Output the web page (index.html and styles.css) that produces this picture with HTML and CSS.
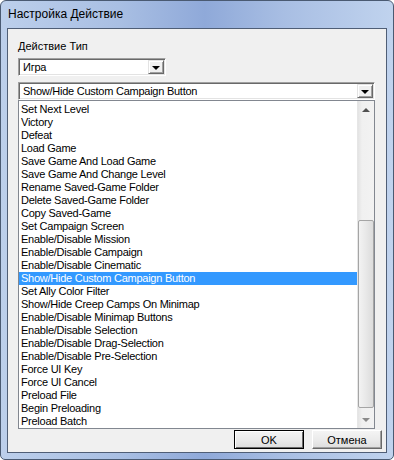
FILE: index.html
```html
<!DOCTYPE html>
<html lang="ru">
<head>
    <meta charset="UTF-8">
    <title>Настройка Действие</title>
    <link rel="stylesheet" href="styles.css">
</head>
<body>
    <div class="window">
        <div class="titlebar">Настройка Действие</div>
        <div class="client">
            <div class="label">Действие Тип</div>
            <div class="combo combo-small">
                <div class="combo-text">Игра</div>
                <div class="combo-btn"><span class="arrow-down"></span></div>
            </div>
            <div class="combo combo-wide">
                <div class="combo-text">Show/Hide Custom Campaign Button</div>
                <div class="combo-btn"><span class="arrow-down"></span></div>
            </div>
            <div class="listbox">
                <ul class="items">
                    <li>Set Next Level</li>
                    <li>Victory</li>
                    <li>Defeat</li>
                    <li>Load Game</li>
                    <li>Save Game And Load Game</li>
                    <li>Save Game And Change Level</li>
                    <li>Rename Saved-Game Folder</li>
                    <li>Delete Saved-Game Folder</li>
                    <li>Copy Saved-Game</li>
                    <li>Set Campaign Screen</li>
                    <li>Enable/Disable Mission</li>
                    <li>Enable/Disable Campaign</li>
                    <li>Enable/Disable Cinematic</li>
                    <li class="selected">Show/Hide Custom Campaign Button</li>
                    <li>Set Ally Color Filter</li>
                    <li>Show/Hide Creep Camps On Minimap</li>
                    <li>Enable/Disable Minimap Buttons</li>
                    <li>Enable/Disable Selection</li>
                    <li>Enable/Disable Drag-Selection</li>
                    <li>Enable/Disable Pre-Selection</li>
                    <li>Force UI Key</li>
                    <li>Force UI Cancel</li>
                    <li>Preload File</li>
                    <li>Begin Preloading</li>
                    <li>Preload Batch</li>
                </ul>
                <div class="scrollbar">
                    <div class="sb-arrow"><span class="tri-up"></span></div>
                    <div class="sb-track">
                        <div class="sb-thumb"></div>
                    </div>
                    <div class="sb-arrow"><span class="tri-down"></span></div>
                </div>
            </div>
            <div class="buttons">
                <button class="btn btn-default">OK</button>
                <button class="btn">Отмена</button>
            </div>
        </div>
    </div>
</body>
</html>
```

FILE: styles.css
```css
* {
    margin: 0;
    padding: 0;
    box-sizing: border-box;
}

body {
    width: 394px;
    height: 460px;
    overflow: hidden;
    background: #ffffff;
    font-family: "Liberation Sans", Arial, sans-serif;
}

.window {
    width: 394px;
    height: 460px;
    display: flex;
    flex-direction: column;
    padding: 0 6px 6px 6px;
    border: 1px solid #4a5a72;
    border-radius: 6px 6px 5px 5px;
    background: linear-gradient(90deg, #bccfeb 0%, #a9bfe3 30%, #8fa9d9 52%, #a8bee3 72%, #c0d3ee 100%);
}

.titlebar {
    height: 27px;
    line-height: 27px;
    padding-left: 1px;
    font-size: 12px;
    color: #000000;
}

.client {
    flex: 1;
    display: flex;
    flex-direction: column;
    padding: 11px 4px 0 10px;
    background: #f0f0f0;
    border: 1px solid #4f5e76;
}

.label {
    font-size: 11px;
    line-height: 13px;
    color: #000000;
    margin-bottom: 5px;
}

.combo {
    display: flex;
    height: 18px;
    background: #ffffff;
    border-top: 1px solid #a0a0a0;
    border-left: 1px solid #a0a0a0;
    border-right: 1px solid #ffffff;
    border-bottom: 1px solid #ffffff;
    box-shadow: inset 1px 1px 0 #696969, inset -1px -1px 0 #e3e3e3;
    padding: 2px;
}

.combo-small {
    width: 148px;
    margin-bottom: 6px;
}

.combo-wide {
    width: 357px;
}

.combo-text {
    flex: 1;
    font-size: 11px;
    line-height: 13px;
    letter-spacing: -0.25px;
    padding-left: 2px;
}

.combo-btn {
    width: 16px;
    display: flex;
    align-items: center;
    justify-content: center;
    background: #f0f0f0;
    border-top: 1px solid #e3e3e3;
    border-left: 1px solid #e3e3e3;
    border-right: 1px solid #696969;
    border-bottom: 1px solid #696969;
    box-shadow: inset 1px 1px 0 #ffffff, inset -1px -1px 0 #a0a0a0;
    margin: -1px -1px -1px 0;
}

.arrow-down {
    width: 0;
    height: 0;
    border-left: 4px solid transparent;
    border-right: 4px solid transparent;
    border-top: 4px solid #000000;
    margin-top: 1px;
}

.listbox {
    width: 357px;
    height: 329px;
    display: flex;
    background: #ffffff;
    border: 1px solid #828790;
}

.items {
    flex: 1;
    list-style: none;
    padding-top: 2px;
}

.items li {
    height: 13px;
    line-height: 13px;
    font-size: 11px;
    letter-spacing: -0.25px;
    padding-left: 2px;
    white-space: nowrap;
    color: #000000;
}

.items li.selected {
    background: #3399ff;
    color: #ffffff;
}

.scrollbar {
    width: 17px;
    display: flex;
    flex-direction: column;
    background: linear-gradient(90deg, #e3e3e3 0%, #f0f0f0 25%, #f2f2f2 100%);
    border-left: 1px solid #e6e6e6;
}

.sb-arrow {
    height: 17px;
    display: flex;
    align-items: center;
    justify-content: center;
}

.tri-up {
    width: 0;
    height: 0;
    border-left: 4px solid transparent;
    border-right: 4px solid transparent;
    border-bottom: 4px solid #505050;
}

.tri-down {
    width: 0;
    height: 0;
    border-left: 4px solid transparent;
    border-right: 4px solid transparent;
    border-top: 4px solid #8a8a8a;
}

.sb-track {
    flex: 1;
    display: flex;
    flex-direction: column;
    justify-content: flex-end;
    padding-bottom: 3px;
}

.sb-thumb {
    height: 188px;
    border: 1px solid #a5a5a5;
    border-radius: 2px;
    background: linear-gradient(90deg, #f3f3f3 0%, #e8e8e8 50%, #dcdcdc 100%);
}

.buttons {
    display: flex;
    justify-content: flex-end;
    gap: 8px;
    margin-top: 1px;
}

.btn {
    width: 70px;
    height: 19px;
    font-family: "Liberation Sans", Arial, sans-serif;
    font-size: 11px;
    color: #000000;
    background: linear-gradient(180deg, #f4f4f4 0%, #ebebeb 50%, #dddddd 100%);
    border-top: 1px solid #ffffff;
    border-left: 1px solid #ffffff;
    border-right: 1px solid #696969;
    border-bottom: 1px solid #696969;
    box-shadow: inset -1px -1px 0 #a0a0a0;
}

.btn-default {
    border: 1px solid #000000;
    box-shadow: inset 1px 1px 0 #ffffff, inset -1px -1px 0 #696969;
}
```
